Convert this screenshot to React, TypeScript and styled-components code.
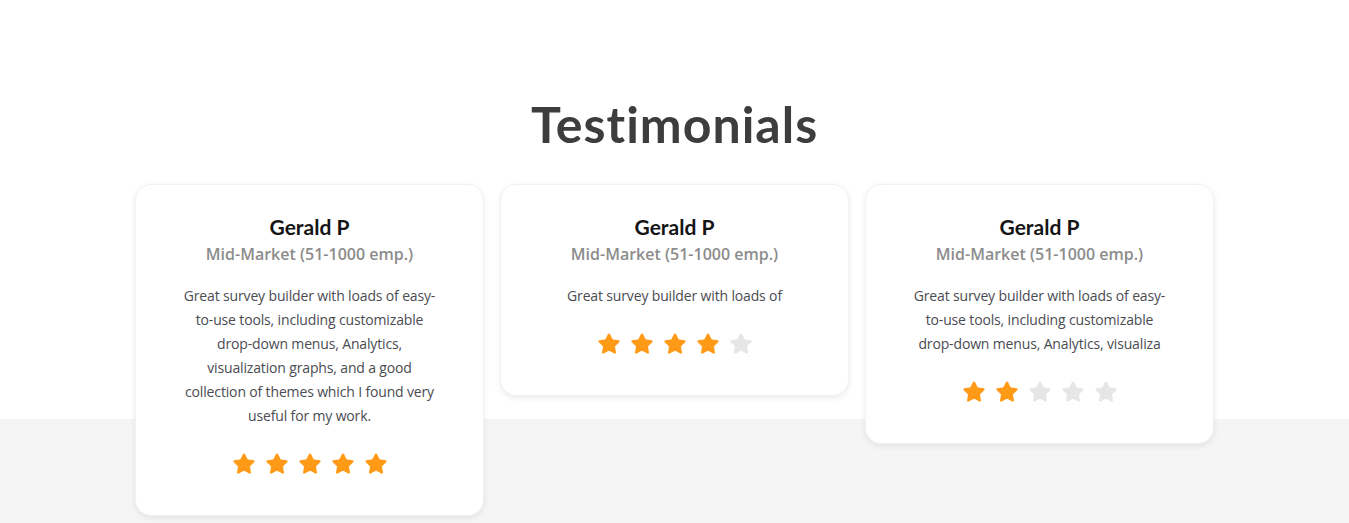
import React from "react";
import styled, { createGlobalStyle } from "styled-components";

const Global = createGlobalStyle`
  html, body { margin: 0; padding: 0; background: #fff; }
  body { font-family: "Open Sans", "Liberation Sans", sans-serif; }
`;

const Section = styled.section`
  min-height: 523px;
  background: linear-gradient(to bottom, #ffffff 419px, #f5f5f5 419px);
  display: flex;
  flex-direction: column;
  align-items: center;
  padding-top: 92px;
  box-sizing: border-box;
`;

const Title = styled.h2`
  margin: 0 0 28px;
  font-family: Lato, "Liberation Sans", sans-serif;
  font-weight: 700;
  font-size: 50px;
  line-height: 64px;
  color: #3d3d3d;
  letter-spacing: 1px;
`;

const Row = styled.div`
  display: flex;
  gap: 16px;
  align-items: flex-start;
`;

const Card = styled.article`
  width: 349px;
  box-sizing: border-box;
  background: #fff;
  border-radius: 16px;
  border: 1px solid #f2f2f2;
  box-shadow: 0 2px 6px rgba(0, 0, 0, 0.08);
  padding: 30px 40px 39px;
  display: flex;
  flex-direction: column;
  align-items: center;
  text-align: center;
`;

const Name = styled.h3`
  margin: 0;
  font-family: Lato, "Liberation Sans", sans-serif;
  font-weight: 700;
  font-size: 21px;
  line-height: 24px;
  color: #151515;
`;

const Company = styled.div`
  margin-top: 3px;
  font-family: "Open Sans", sans-serif;
  font-weight: 600;
  font-size: 16px;
  line-height: 24px;
  color: #8c8c8c;
`;

const Quote = styled.p`
  margin: 18px 0 0;
  font-family: "Open Sans", sans-serif;
  font-size: 14px;
  line-height: 24px;
  letter-spacing: -0.15px;
  color: #4a4c52;
  max-width: 258px;
`;

const Stars = styled.div`
  margin-top: 24px;
  display: flex;
  gap: 9px;
`;

const StarSvg = styled.svg<{ $on: boolean }>`
  width: 24px;
  height: 24px;
  display: block;
  fill: ${(p) => (p.$on ? "#ff9a17" : "#e6e6e6")};
  stroke: ${(p) => (p.$on ? "#ff9a17" : "#e6e6e6")};
  stroke-width: 1.2;
  stroke-linejoin: round;
`;

const Star = ({ on }: { on: boolean }) => (
  <StarSvg $on={on} viewBox="0 0 24 24">
    <path d="M11.525 2.295a.53.53 0 0 1 .95 0l2.31 4.679a2.123 2.123 0 0 0 1.595 1.16l5.166.756a.53.53 0 0 1 .294.904l-3.736 3.638a2.123 2.123 0 0 0-.611 1.878l.882 5.14a.53.53 0 0 1-.771.56l-4.618-2.428a2.122 2.122 0 0 0-1.973 0L6.396 21.01a.53.53 0 0 1-.77-.56l.881-5.139a2.122 2.122 0 0 0-.611-1.879L2.160 9.795a.53.53 0 0 1 .294-.906l5.165-.755a2.122 2.122 0 0 0 1.597-1.160z" />
  </StarSvg>
);

const data = [
  {
    text: "Great survey builder with loads of easy-to-use tools, including customizable drop-down menus, Analytics, visualization graphs, and a good collection of themes which I found very useful for my work.",
    rating: 5,
  },
  { text: "Great survey builder with loads of", rating: 4 },
  {
    text: "Great survey builder with loads of easy-to-use tools, including customizable drop-down menus, Analytics, visualiza",
    rating: 2,
  },
];

export default function App() {
  return (
    <>
      <Global />
      <Section>
        <Title>Testimonials</Title>
        <Row>
          {data.map((d, i) => (
            <Card key={i}>
              <Name>Gerald P</Name>
              <Company>Mid-Market (51-1000 emp.)</Company>
              <Quote>{d.text}</Quote>
              <Stars>
                {[0, 1, 2, 3, 4].map((s) => (
                  <Star key={s} on={s < d.rating} />
                ))}
              </Stars>
            </Card>
          ))}
        </Row>
      </Section>
    </>
  );
}
